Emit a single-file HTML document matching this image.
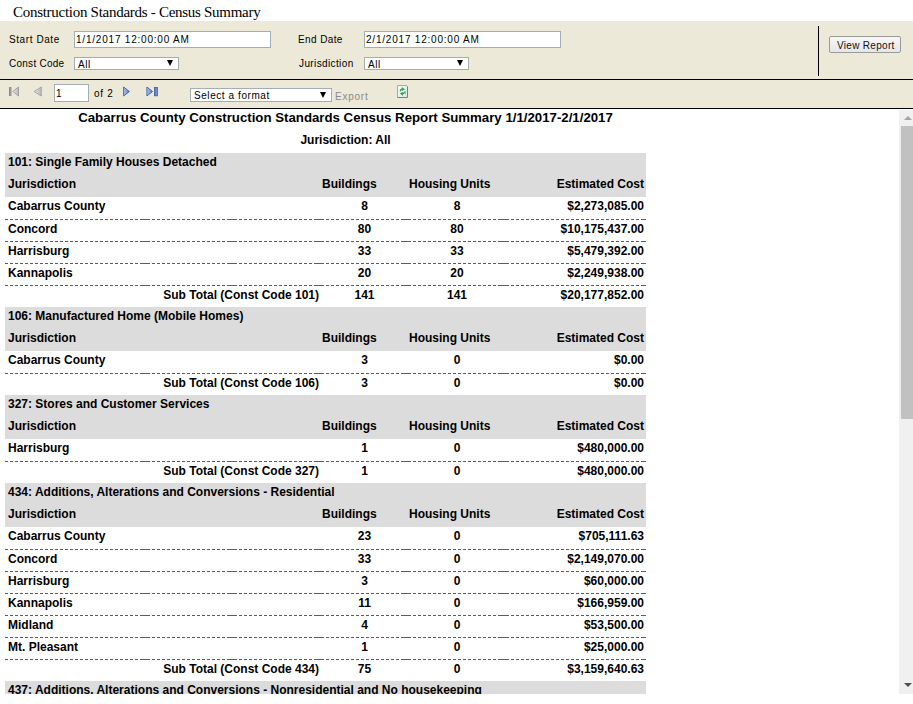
<!DOCTYPE html>
<html><head><meta charset="utf-8"><title>Construction Standards - Census Summary</title>
<style>
*{box-sizing:border-box}
html,body{margin:0;padding:0;background:#fff;width:913px;height:704px;overflow:hidden;position:relative}
body{font-family:"Liberation Sans",sans-serif;color:#000}
.a{position:absolute;white-space:nowrap}
#ptitle{position:absolute;left:13px;top:5px;font-family:"Liberation Serif",serif;font-size:15px;line-height:15px;letter-spacing:-0.28px;color:#000;white-space:nowrap}
#params{position:absolute;left:0;top:21px;width:913px;height:58px;background:#ECE9D8}
#hr1{position:absolute;left:0;top:79px;width:913px;height:1px;background:#000}
#toolbar{position:absolute;left:0;top:80px;width:913px;height:28px;background:#ECE9D8}
#hr2{position:absolute;left:0;top:108px;width:913px;height:1px;background:#000}
#vsep{position:absolute;left:818px;top:26px;width:1px;height:50px;background:#000}
.lbl{position:absolute;font-size:10px;line-height:10px;white-space:nowrap;color:#000}
.inp{position:absolute;background:#fff;border:1px solid #a5acb2;}
.inp span{position:absolute;font-size:10px;line-height:10px;white-space:nowrap}
.sel{position:absolute;background:#fff;border:1px solid #a5acb2;overflow:hidden}
.sel span{position:absolute;font-size:10px;line-height:10px;white-space:nowrap}
.arr{position:absolute;width:0;height:0;border-left:3px solid transparent;border-right:3px solid transparent;border-top:6px solid #000}
#btn{position:absolute;left:829px;top:15px;width:72px;height:17px;border:1px solid #9a9a9a;border-radius:2px;background:linear-gradient(#f7f7f7,#e6e6e6)}
#btn span{position:absolute;left:7px;top:4px;font-size:10px;line-height:10px;letter-spacing:0.3px;color:#111;white-space:nowrap}
#report{position:absolute;left:0;top:109px;width:899px;height:585px;overflow:hidden;background:#fff}
#report .g{position:absolute;left:5px;width:641px;height:22px;background:#DCDCDC}
#report .d{position:absolute;height:1px;background:repeating-linear-gradient(to right,#5c5c5c 0 3px,transparent 3px 5px)}
#report .de{position:absolute;height:1px;width:5px;background:#5c5c5c}
#report .t{position:absolute;font-size:12px;line-height:14px;font-weight:bold;white-space:nowrap}
#report .c{text-align:center}
#rtitle{position:absolute;left:0;top:1px;width:691px;text-align:center;font-size:13.24px;line-height:15px;font-weight:bold;white-space:nowrap}
#rsub{position:absolute;left:0;top:24px;width:691px;text-align:center;font-size:12px;line-height:14px;font-weight:bold;white-space:nowrap}
#sb{position:absolute;left:899px;top:110px;width:14px;height:584px;background:#f0f0f0}
#thumb{position:absolute;left:2px;top:16px;width:12px;height:293px;background:#c1c1c1}
#up{position:absolute;left:5px;top:6px;width:0;height:0;border-left:4px solid transparent;border-right:4px solid transparent;border-bottom:4px solid #a3a3a3}
#down{position:absolute;left:5px;top:573px;width:0;height:0;border-left:4px solid transparent;border-right:4px solid transparent;border-top:4px solid #505050}
</style></head><body>
<div id="ptitle">Construction Standards - Census Summary</div>
<div id="params">
  <div class="lbl" style="left:9px;top:14px;letter-spacing:0.58px">Start Date</div>
  <div class="inp" style="left:74px;top:10px;width:197px;height:17px"><span style="left:1px;top:3px;letter-spacing:0.79px">1/1/2017 12:00:00 AM</span></div>
  <div class="lbl" style="left:9px;top:38px;letter-spacing:0.26px">Const Code</div>
  <div class="sel" style="left:74px;top:36px;width:105px;height:13px"><span style="left:3px;top:2px;letter-spacing:0.5px">All</span><div class="arr" style="left:92px;top:2px"></div></div>
  <div class="lbl" style="left:298px;top:14px;letter-spacing:0.39px">End Date</div>
  <div class="inp" style="left:364px;top:10px;width:197px;height:17px"><span style="left:1px;top:3px;letter-spacing:0.79px">2/1/2017 12:00:00 AM</span></div>
  <div class="lbl" style="left:299px;top:38px;letter-spacing:0.38px">Jurisdiction</div>
  <div class="sel" style="left:364px;top:36px;width:105px;height:13px"><span style="left:3px;top:2px;letter-spacing:0.5px">All</span><div class="arr" style="left:92px;top:2px"></div></div>
  <div id="btn"><span>View Report</span></div>
</div>
<div id="vsep"></div>
<div id="hr1"></div>
<div id="toolbar">
  <svg class="a" style="left:0;top:0" width="200" height="28" viewBox="0 80 200 28">
    <defs>
      <linearGradient id="gb" x1="0" x2="1" y1="0" y2="0"><stop offset="0" stop-color="#7e7e7e"/><stop offset="1" stop-color="#b8b8b8"/></linearGradient>
      <linearGradient id="gt" x1="0" x2="1" y1="0" y2="0"><stop offset="0" stop-color="#e6e6e0"/><stop offset="1" stop-color="#b8b8b8"/></linearGradient>
      <linearGradient id="bt" x1="0" x2="1" y1="0" y2="0"><stop offset="0" stop-color="#b4c8f4"/><stop offset="1" stop-color="#5474c0"/></linearGradient>
      <linearGradient id="bb" x1="0" x2="1" y1="0" y2="0"><stop offset="0" stop-color="#4a6ab8"/><stop offset="1" stop-color="#8aa4e0"/></linearGradient>
    </defs>
    <rect x="9" y="87" width="2.8" height="9" fill="url(#gb)"/>
    <path d="M18.5 87 L12.8 91.5 L18.5 96 Z" fill="url(#gt)" stroke="#9a9a9a" stroke-width="0.9" stroke-linejoin="round"/>
    <path d="M41.3 87 L34 91.5 L41.3 96 Z" fill="url(#gt)" stroke="#a0a0a0" stroke-width="0.9" stroke-linejoin="round"/>
    <path d="M123.6 87 L129.4 91.5 L123.6 96 Z" fill="url(#bt)" stroke="#3f5ea6" stroke-width="0.9" stroke-linejoin="round"/>
    <path d="M146.9 87 L152.6 91.5 L146.9 96 Z" fill="url(#bt)" stroke="#3f5ea6" stroke-width="0.9" stroke-linejoin="round"/>
    <rect x="154.5" y="87.4" width="2.9" height="8.4" fill="url(#bb)" stroke="#3f5ea6" stroke-width="0.8"/>
  </svg>
  <div class="inp" style="left:54px;top:4px;width:35px;height:18px"><span style="left:1px;top:4px">1</span></div>
  <div class="lbl" style="left:94px;top:9px;letter-spacing:0.7px">of 2</div>
  <div class="sel" style="left:190px;top:8px;width:142px;height:14px"><span style="left:3px;top:2px;letter-spacing:0.57px">Select a format</span><div class="arr" style="left:129px;top:3px"></div></div>
  <div class="lbl" style="left:335px;top:12px;letter-spacing:0.76px;color:#8a8a8a">Export</div>
  <svg class="a" style="left:396px;top:4px" width="14" height="15" viewBox="396 84 14 15">
    <defs><linearGradient id="rf" x1="0" x2="1" y1="0" y2="1"><stop offset="0" stop-color="#f4fcf8"/><stop offset="1" stop-color="#cfeee2"/></linearGradient></defs>
    <path d="M397.5 85.5 H406.3 L407.5 86.8 V97.5 H397.5 Z" fill="url(#rf)"/>
    <path d="M397.5 97.5 V85.5 H406.3" fill="none" stroke="#a8a8a8" stroke-width="1"/>
    <path d="M406.3 85.5 L407.5 86.8 V97.5 H397.5" fill="none" stroke="#7c7c7c" stroke-width="1"/>
    <path d="M399.6 91.2 Q399.8 88.9 401.9 88.5 L401.7 87 L404.9 89.3 L402.1 91.1 L402.1 89.9 Q400.9 90.2 400.7 91.4 Z" fill="#3f9458"/>
    <path d="M405.2 91.6 Q405 94 402.9 94.4 L403.1 95.9 L399.9 93.6 L402.7 91.8 L402.7 93 Q403.9 92.7 404.1 91.5 Z" fill="#3f9458"/>
    <rect x="405" y="91.2" width="1" height="3.2" fill="#8cc4b4"/>
  </svg>
</div>
<div id="hr2"></div>
<div id="report">
<div id="rtitle">Cabarrus County Construction Standards Census Report Summary 1/1/2017-2/1/2017</div>
<div id="rsub">Jurisdiction: All</div>
<div class="g" style="top:44px"></div><div class="t" style="top:45.5px;left:8px">101: Single Family Houses Detached</div>
<div class="g" style="top:66px"></div><div class="t" style="top:67.5px;left:8px">Jurisdiction</div><div class="t" style="top:67.5px;left:322px">Buildings</div><div class="t" style="top:67.5px;left:409px">Housing Units</div><div class="t r" style="top:67.5px;right:255px">Estimated Cost</div>
<div class="t" style="top:89.5px;left:8px">Cabarrus County</div><div class="t c" style="top:89.5px;left:321px;width:87px">8</div><div class="t c" style="top:89.5px;left:408px;width:98px">8</div><div class="t r" style="top:89.5px;right:255px">$2,273,085.00</div>
<div class="d" style="top:110px;left:5px;width:142px"></div><div class="de" style="top:110px;left:142px"></div><div class="d" style="top:110px;left:147px;width:87px"></div><div class="de" style="top:110px;left:229px"></div><div class="d" style="top:110px;left:234px;width:87px"></div><div class="de" style="top:110px;left:316px"></div><div class="d" style="top:110px;left:321px;width:87px"></div><div class="de" style="top:110px;left:403px"></div><div class="d" style="top:110px;left:408px;width:98px"></div><div class="de" style="top:110px;left:501px"></div><div class="d" style="top:110px;left:506px;width:140px"></div><div class="de" style="top:110px;left:641px"></div><div class="t" style="top:112.5px;left:8px">Concord</div><div class="t c" style="top:112.5px;left:321px;width:87px">80</div><div class="t c" style="top:112.5px;left:408px;width:98px">80</div><div class="t r" style="top:112.5px;right:255px">$10,175,437.00</div>
<div class="d" style="top:132px;left:5px;width:142px"></div><div class="de" style="top:132px;left:142px"></div><div class="d" style="top:132px;left:147px;width:87px"></div><div class="de" style="top:132px;left:229px"></div><div class="d" style="top:132px;left:234px;width:87px"></div><div class="de" style="top:132px;left:316px"></div><div class="d" style="top:132px;left:321px;width:87px"></div><div class="de" style="top:132px;left:403px"></div><div class="d" style="top:132px;left:408px;width:98px"></div><div class="de" style="top:132px;left:501px"></div><div class="d" style="top:132px;left:506px;width:140px"></div><div class="de" style="top:132px;left:641px"></div><div class="t" style="top:134.5px;left:8px">Harrisburg</div><div class="t c" style="top:134.5px;left:321px;width:87px">33</div><div class="t c" style="top:134.5px;left:408px;width:98px">33</div><div class="t r" style="top:134.5px;right:255px">$5,479,392.00</div>
<div class="d" style="top:154px;left:5px;width:142px"></div><div class="de" style="top:154px;left:142px"></div><div class="d" style="top:154px;left:147px;width:87px"></div><div class="de" style="top:154px;left:229px"></div><div class="d" style="top:154px;left:234px;width:87px"></div><div class="de" style="top:154px;left:316px"></div><div class="d" style="top:154px;left:321px;width:87px"></div><div class="de" style="top:154px;left:403px"></div><div class="d" style="top:154px;left:408px;width:98px"></div><div class="de" style="top:154px;left:501px"></div><div class="d" style="top:154px;left:506px;width:140px"></div><div class="de" style="top:154px;left:641px"></div><div class="t" style="top:156.5px;left:8px">Kannapolis</div><div class="t c" style="top:156.5px;left:321px;width:87px">20</div><div class="t c" style="top:156.5px;left:408px;width:98px">20</div><div class="t r" style="top:156.5px;right:255px">$2,249,938.00</div>
<div class="d" style="top:176px;left:5px;width:142px"></div><div class="de" style="top:176px;left:142px"></div><div class="d" style="top:176px;left:147px;width:87px"></div><div class="de" style="top:176px;left:229px"></div><div class="d" style="top:176px;left:234px;width:87px"></div><div class="de" style="top:176px;left:316px"></div><div class="d" style="top:176px;left:321px;width:87px"></div><div class="de" style="top:176px;left:403px"></div><div class="d" style="top:176px;left:408px;width:98px"></div><div class="de" style="top:176px;left:501px"></div><div class="d" style="top:176px;left:506px;width:140px"></div><div class="de" style="top:176px;left:641px"></div><div class="t r" style="top:178.5px;right:580px">Sub Total (Const Code 101)</div><div class="t c" style="top:178.5px;left:321px;width:87px">141</div><div class="t c" style="top:178.5px;left:408px;width:98px">141</div><div class="t r" style="top:178.5px;right:255px">$20,177,852.00</div>
<div class="g" style="top:198px"></div><div class="t" style="top:199.5px;left:8px">106: Manufactured Home (Mobile Homes)</div>
<div class="g" style="top:220px"></div><div class="t" style="top:221.5px;left:8px">Jurisdiction</div><div class="t" style="top:221.5px;left:322px">Buildings</div><div class="t" style="top:221.5px;left:409px">Housing Units</div><div class="t r" style="top:221.5px;right:255px">Estimated Cost</div>
<div class="t" style="top:243.5px;left:8px">Cabarrus County</div><div class="t c" style="top:243.5px;left:321px;width:87px">3</div><div class="t c" style="top:243.5px;left:408px;width:98px">0</div><div class="t r" style="top:243.5px;right:255px">$0.00</div>
<div class="d" style="top:264px;left:5px;width:142px"></div><div class="de" style="top:264px;left:142px"></div><div class="d" style="top:264px;left:147px;width:87px"></div><div class="de" style="top:264px;left:229px"></div><div class="d" style="top:264px;left:234px;width:87px"></div><div class="de" style="top:264px;left:316px"></div><div class="d" style="top:264px;left:321px;width:87px"></div><div class="de" style="top:264px;left:403px"></div><div class="d" style="top:264px;left:408px;width:98px"></div><div class="de" style="top:264px;left:501px"></div><div class="d" style="top:264px;left:506px;width:140px"></div><div class="de" style="top:264px;left:641px"></div><div class="t r" style="top:266.5px;right:580px">Sub Total (Const Code 106)</div><div class="t c" style="top:266.5px;left:321px;width:87px">3</div><div class="t c" style="top:266.5px;left:408px;width:98px">0</div><div class="t r" style="top:266.5px;right:255px">$0.00</div>
<div class="g" style="top:286px"></div><div class="t" style="top:287.5px;left:8px">327: Stores and Customer Services</div>
<div class="g" style="top:308px"></div><div class="t" style="top:309.5px;left:8px">Jurisdiction</div><div class="t" style="top:309.5px;left:322px">Buildings</div><div class="t" style="top:309.5px;left:409px">Housing Units</div><div class="t r" style="top:309.5px;right:255px">Estimated Cost</div>
<div class="t" style="top:331.5px;left:8px">Harrisburg</div><div class="t c" style="top:331.5px;left:321px;width:87px">1</div><div class="t c" style="top:331.5px;left:408px;width:98px">0</div><div class="t r" style="top:331.5px;right:255px">$480,000.00</div>
<div class="d" style="top:352px;left:5px;width:142px"></div><div class="de" style="top:352px;left:142px"></div><div class="d" style="top:352px;left:147px;width:87px"></div><div class="de" style="top:352px;left:229px"></div><div class="d" style="top:352px;left:234px;width:87px"></div><div class="de" style="top:352px;left:316px"></div><div class="d" style="top:352px;left:321px;width:87px"></div><div class="de" style="top:352px;left:403px"></div><div class="d" style="top:352px;left:408px;width:98px"></div><div class="de" style="top:352px;left:501px"></div><div class="d" style="top:352px;left:506px;width:140px"></div><div class="de" style="top:352px;left:641px"></div><div class="t r" style="top:354.5px;right:580px">Sub Total (Const Code 327)</div><div class="t c" style="top:354.5px;left:321px;width:87px">1</div><div class="t c" style="top:354.5px;left:408px;width:98px">0</div><div class="t r" style="top:354.5px;right:255px">$480,000.00</div>
<div class="g" style="top:374px"></div><div class="t" style="top:375.5px;left:8px">434: Additions, Alterations and Conversions - Residential</div>
<div class="g" style="top:396px"></div><div class="t" style="top:397.5px;left:8px">Jurisdiction</div><div class="t" style="top:397.5px;left:322px">Buildings</div><div class="t" style="top:397.5px;left:409px">Housing Units</div><div class="t r" style="top:397.5px;right:255px">Estimated Cost</div>
<div class="t" style="top:419.5px;left:8px">Cabarrus County</div><div class="t c" style="top:419.5px;left:321px;width:87px">23</div><div class="t c" style="top:419.5px;left:408px;width:98px">0</div><div class="t r" style="top:419.5px;right:255px">$705,111.63</div>
<div class="d" style="top:440px;left:5px;width:142px"></div><div class="de" style="top:440px;left:142px"></div><div class="d" style="top:440px;left:147px;width:87px"></div><div class="de" style="top:440px;left:229px"></div><div class="d" style="top:440px;left:234px;width:87px"></div><div class="de" style="top:440px;left:316px"></div><div class="d" style="top:440px;left:321px;width:87px"></div><div class="de" style="top:440px;left:403px"></div><div class="d" style="top:440px;left:408px;width:98px"></div><div class="de" style="top:440px;left:501px"></div><div class="d" style="top:440px;left:506px;width:140px"></div><div class="de" style="top:440px;left:641px"></div><div class="t" style="top:442.5px;left:8px">Concord</div><div class="t c" style="top:442.5px;left:321px;width:87px">33</div><div class="t c" style="top:442.5px;left:408px;width:98px">0</div><div class="t r" style="top:442.5px;right:255px">$2,149,070.00</div>
<div class="d" style="top:462px;left:5px;width:142px"></div><div class="de" style="top:462px;left:142px"></div><div class="d" style="top:462px;left:147px;width:87px"></div><div class="de" style="top:462px;left:229px"></div><div class="d" style="top:462px;left:234px;width:87px"></div><div class="de" style="top:462px;left:316px"></div><div class="d" style="top:462px;left:321px;width:87px"></div><div class="de" style="top:462px;left:403px"></div><div class="d" style="top:462px;left:408px;width:98px"></div><div class="de" style="top:462px;left:501px"></div><div class="d" style="top:462px;left:506px;width:140px"></div><div class="de" style="top:462px;left:641px"></div><div class="t" style="top:464.5px;left:8px">Harrisburg</div><div class="t c" style="top:464.5px;left:321px;width:87px">3</div><div class="t c" style="top:464.5px;left:408px;width:98px">0</div><div class="t r" style="top:464.5px;right:255px">$60,000.00</div>
<div class="d" style="top:484px;left:5px;width:142px"></div><div class="de" style="top:484px;left:142px"></div><div class="d" style="top:484px;left:147px;width:87px"></div><div class="de" style="top:484px;left:229px"></div><div class="d" style="top:484px;left:234px;width:87px"></div><div class="de" style="top:484px;left:316px"></div><div class="d" style="top:484px;left:321px;width:87px"></div><div class="de" style="top:484px;left:403px"></div><div class="d" style="top:484px;left:408px;width:98px"></div><div class="de" style="top:484px;left:501px"></div><div class="d" style="top:484px;left:506px;width:140px"></div><div class="de" style="top:484px;left:641px"></div><div class="t" style="top:486.5px;left:8px">Kannapolis</div><div class="t c" style="top:486.5px;left:321px;width:87px">11</div><div class="t c" style="top:486.5px;left:408px;width:98px">0</div><div class="t r" style="top:486.5px;right:255px">$166,959.00</div>
<div class="d" style="top:506px;left:5px;width:142px"></div><div class="de" style="top:506px;left:142px"></div><div class="d" style="top:506px;left:147px;width:87px"></div><div class="de" style="top:506px;left:229px"></div><div class="d" style="top:506px;left:234px;width:87px"></div><div class="de" style="top:506px;left:316px"></div><div class="d" style="top:506px;left:321px;width:87px"></div><div class="de" style="top:506px;left:403px"></div><div class="d" style="top:506px;left:408px;width:98px"></div><div class="de" style="top:506px;left:501px"></div><div class="d" style="top:506px;left:506px;width:140px"></div><div class="de" style="top:506px;left:641px"></div><div class="t" style="top:508.5px;left:8px">Midland</div><div class="t c" style="top:508.5px;left:321px;width:87px">4</div><div class="t c" style="top:508.5px;left:408px;width:98px">0</div><div class="t r" style="top:508.5px;right:255px">$53,500.00</div>
<div class="d" style="top:528px;left:5px;width:142px"></div><div class="de" style="top:528px;left:142px"></div><div class="d" style="top:528px;left:147px;width:87px"></div><div class="de" style="top:528px;left:229px"></div><div class="d" style="top:528px;left:234px;width:87px"></div><div class="de" style="top:528px;left:316px"></div><div class="d" style="top:528px;left:321px;width:87px"></div><div class="de" style="top:528px;left:403px"></div><div class="d" style="top:528px;left:408px;width:98px"></div><div class="de" style="top:528px;left:501px"></div><div class="d" style="top:528px;left:506px;width:140px"></div><div class="de" style="top:528px;left:641px"></div><div class="t" style="top:530.5px;left:8px">Mt. Pleasant</div><div class="t c" style="top:530.5px;left:321px;width:87px">1</div><div class="t c" style="top:530.5px;left:408px;width:98px">0</div><div class="t r" style="top:530.5px;right:255px">$25,000.00</div>
<div class="d" style="top:550px;left:5px;width:142px"></div><div class="de" style="top:550px;left:142px"></div><div class="d" style="top:550px;left:147px;width:87px"></div><div class="de" style="top:550px;left:229px"></div><div class="d" style="top:550px;left:234px;width:87px"></div><div class="de" style="top:550px;left:316px"></div><div class="d" style="top:550px;left:321px;width:87px"></div><div class="de" style="top:550px;left:403px"></div><div class="d" style="top:550px;left:408px;width:98px"></div><div class="de" style="top:550px;left:501px"></div><div class="d" style="top:550px;left:506px;width:140px"></div><div class="de" style="top:550px;left:641px"></div><div class="t r" style="top:552.5px;right:580px">Sub Total (Const Code 434)</div><div class="t c" style="top:552.5px;left:321px;width:87px">75</div><div class="t c" style="top:552.5px;left:408px;width:98px">0</div><div class="t r" style="top:552.5px;right:255px">$3,159,640.63</div>
<div class="g" style="top:572px"></div><div class="t" style="top:573.5px;left:8px">437: Additions, Alterations and Conversions - Nonresidential and No housekeeping</div>
<div class="g" style="top:594px"></div><div class="t" style="top:595.5px;left:8px">Jurisdiction</div><div class="t" style="top:595.5px;left:322px">Buildings</div><div class="t" style="top:595.5px;left:409px">Housing Units</div><div class="t r" style="top:595.5px;right:255px">Estimated Cost</div>
</div>
<div id="sb"><div id="up"></div><div id="thumb"></div><div id="down"></div></div>
</body></html>
